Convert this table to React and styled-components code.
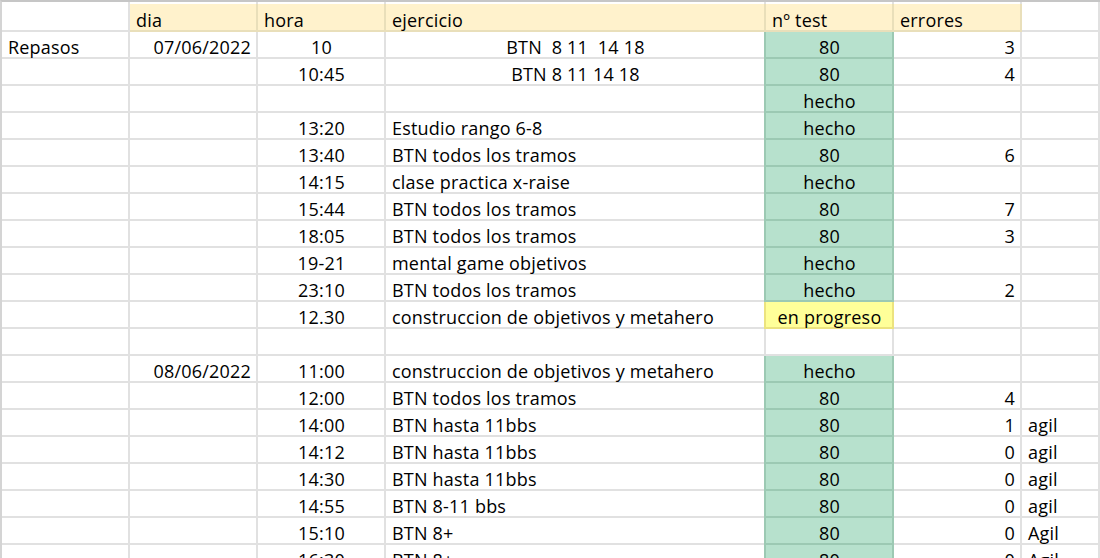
import React from "react";
import styled, { createGlobalStyle, css } from "styled-components";

const Global = createGlobalStyle`
  html, body { margin: 0; padding: 0; background: #ffffff; overflow: hidden; }
  body { width: 1100px; height: 558px; }
`;

const GRID = "#e1e1e1";

const Sheet = styled.div`
  display: grid;
  grid-template-columns: 128px 128px 128px 380px 128px 128px 1fr;
  grid-auto-rows: 27px;
  grid-template-rows: 2px 28px;
  border-top: 2px solid #c6c6c6;
  border-left: 2px solid #d4d4d4;
  width: 1098px;
  font-family: "Open Sans", "Liberation Sans", sans-serif;
  font-size: 18px;
  letter-spacing: 0.2px;
  color: #000;
`;

const tones = {
  green: css`
    background: #b7e1cd;
    border-color: #9cc9b3;
    box-shadow: -2px 0 0 #9cc9b3;
  `,
  yellow: css`
    background: #ffff99;
    border-color: #ece37f;
    box-shadow: -2px 0 0 #ece37f;
  `,
  header: css`
    background: #fff2cc;
    border-color: #e9dfba;
  `,
};

const Cell = styled.div`
  box-sizing: border-box;
  border-right: 2px solid ${GRID};
  border-bottom: 2px solid ${GRID};
  display: flex;
  align-items: flex-end;
  padding: 0 5px 0 6px;
  line-height: 20px;
  white-space: pre;
  overflow: visible;
  justify-content: ${(p) =>
    p.$align === "right" ? "flex-end" : p.$align === "center" ? "center" : "flex-start"};
  ${(p) => p.$tone && tones[p.$tone]}
`;

const Stub = styled(Cell)`
  border-bottom: none;
`;

const rows = [
  { a: "Repasos", dia: "07/06/2022", hora: "10", ej: "BTN  8 11  14 18", ejAlign: "center", test: "80", tone: "green", err: "3" },
  { hora: "10:45", ej: "BTN 8 11 14 18", ejAlign: "center", test: "80", tone: "green", err: "4" },
  { test: "hecho", tone: "green" },
  { hora: "13:20", ej: "Estudio rango 6-8", test: "hecho", tone: "green" },
  { hora: "13:40", ej: "BTN todos los tramos", test: "80", tone: "green", err: "6" },
  { hora: "14:15", ej: "clase practica x-raise", test: "hecho", tone: "green" },
  { hora: "15:44", ej: "BTN todos los tramos", test: "80", tone: "green", err: "7" },
  { hora: "18:05", ej: "BTN todos los tramos", test: "80", tone: "green", err: "3" },
  { hora: "19-21", ej: "mental game objetivos", test: "hecho", tone: "green" },
  { hora: "23:10", ej: "BTN todos los tramos", test: "hecho", tone: "green", err: "2" },
  { hora: "12.30", ej: "construccion de objetivos y metahero", test: "en progreso", tone: "yellow" },
  {},
  { dia: "08/06/2022", hora: "11:00", ej: "construccion de objetivos y metahero", test: "hecho", tone: "green" },
  { hora: "12:00", ej: "BTN todos los tramos", test: "80", tone: "green", err: "4" },
  { hora: "14:00", ej: "BTN hasta 11bbs", test: "80", tone: "green", err: "1", note: "agil" },
  { hora: "14:12", ej: "BTN hasta 11bbs", test: "80", tone: "green", err: "0", note: "agil" },
  { hora: "14:30", ej: "BTN hasta 11bbs", test: "80", tone: "green", err: "0", note: "agil" },
  { hora: "14:55", ej: "BTN 8-11 bbs", test: "80", tone: "green", err: "0", note: "agil" },
  { hora: "15:10", ej: "BTN 8+", test: "80", tone: "green", err: "0", note: "Agil" },
  { hora: "16:30", ej: "BTN 8+", test: "80", tone: "green", err: "0", note: "Agil" },
];

const headers = ["", "dia", "hora", "ejercicio", "nº test", "errores", ""];

export default function App() {
  return (
    <>
      <Global />
      <Sheet>
        {headers.map((_, i) => (
          <Stub key={"s" + i} />
        ))}
        {headers.map((h, i) => (
          <Cell key={"h" + i} $tone={h ? "header" : undefined}>
            {h}
          </Cell>
        ))}
        {rows.map((r, i) => (
          <React.Fragment key={i}>
            <Cell>{r.a || ""}</Cell>
            <Cell $align="right">{r.dia || ""}</Cell>
            <Cell $align="center">{r.hora || ""}</Cell>
            <Cell $align={r.ejAlign}>{r.ej || ""}</Cell>
            <Cell $align="center" $tone={r.test ? r.tone : undefined}>
              {r.test || ""}
            </Cell>
            <Cell $align="right">{r.err || ""}</Cell>
            <Cell>{r.note || ""}</Cell>
          </React.Fragment>
        ))}
      </Sheet>
    </>
  );
}
